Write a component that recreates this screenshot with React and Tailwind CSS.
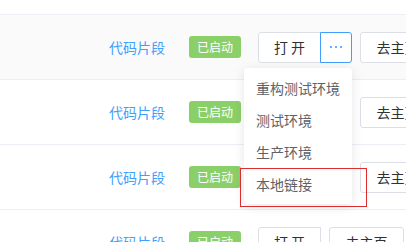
import React from 'react'

const font = { fontFamily: '"Noto Sans CJK SC", "Noto Sans", sans-serif' }

function Row({ hover, split }) {
  return (
    <div
      className={`h-[65px] w-[406px] shrink-0 flex items-center pl-[109px] border-b border-[#ebeef5] ${
        hover ? 'bg-[#fafafa]' : 'bg-white'
      }`}
    >
      <span className="w-[80px] shrink-0 whitespace-nowrap text-[14px] text-[#409eff] leading-none">代码片段</span>
      <span className="w-[52px] h-[22px] rounded-[3px] bg-[#8bcf69] text-white text-[12px] flex items-center justify-center shrink-0 whitespace-nowrap">
        已启动
      </span>
      <div className="ml-[17px] flex items-center shrink-0">
        <button className="w-[63px] h-[31px] shrink-0 border border-[#dcdfe6] bg-white text-[14px] text-[#303133] rounded-l-[3px] rounded-r-none flex items-center justify-center whitespace-nowrap">
          打 开
        </button>
        {split && (
          <button className="w-[32px] h-[31px] shrink-0 border border-[#409eff] bg-white text-[#409eff] rounded-r-[3px] flex items-center justify-center -ml-px">
            <svg width="14" height="4" viewBox="0 0 14 4">
              <circle cx="2" cy="2" r="1.1" fill="#409eff" />
              <circle cx="7" cy="2" r="1.1" fill="#409eff" />
              <circle cx="12" cy="2" r="1.1" fill="#409eff" />
            </svg>
          </button>
        )}
        <button
          className={`${split ? 'ml-[8px]' : 'ml-[8px]'} w-[75px] h-[31px] border border-[#dcdfe6] bg-white text-[14px] text-[#303133] rounded-[3px] flex items-center justify-center shrink-0 whitespace-nowrap`}
        >
          去主页
        </button>
        <button className="ml-[2px] w-[75px] h-[31px] border border-[#dcdfe6] bg-white rounded-[3px] shrink-0" />
      </div>
    </div>
  )
}

export default function App() {
  const items = ['重构测试环境', '测试环境', '生产环境', '本地链接']
  return (
    <div className="relative w-[406px] h-[242px] overflow-hidden bg-white" style={font}>
      <div className="flex flex-col mt-[-50px]">
        <Row split />
        <Row hover split />
        <Row split />
        <Row split />
        <Row />
      </div>

      <div className="absolute left-[244px] top-[68px] w-[108px] bg-white rounded-[4px] shadow-[0_2px_12px_0_rgba(0,0,0,0.1)] py-[4px] z-10">
        {items.map((t) => (
          <div key={t} className="h-[32px] px-[12px] flex items-center text-[14px] text-[#606266] whitespace-nowrap">
            {t}
          </div>
        ))}
      </div>

      <div className="absolute left-[240px] top-[168px] w-[127px] h-[39px] border border-[#e02c2c] z-20" />
    </div>
  )
}
